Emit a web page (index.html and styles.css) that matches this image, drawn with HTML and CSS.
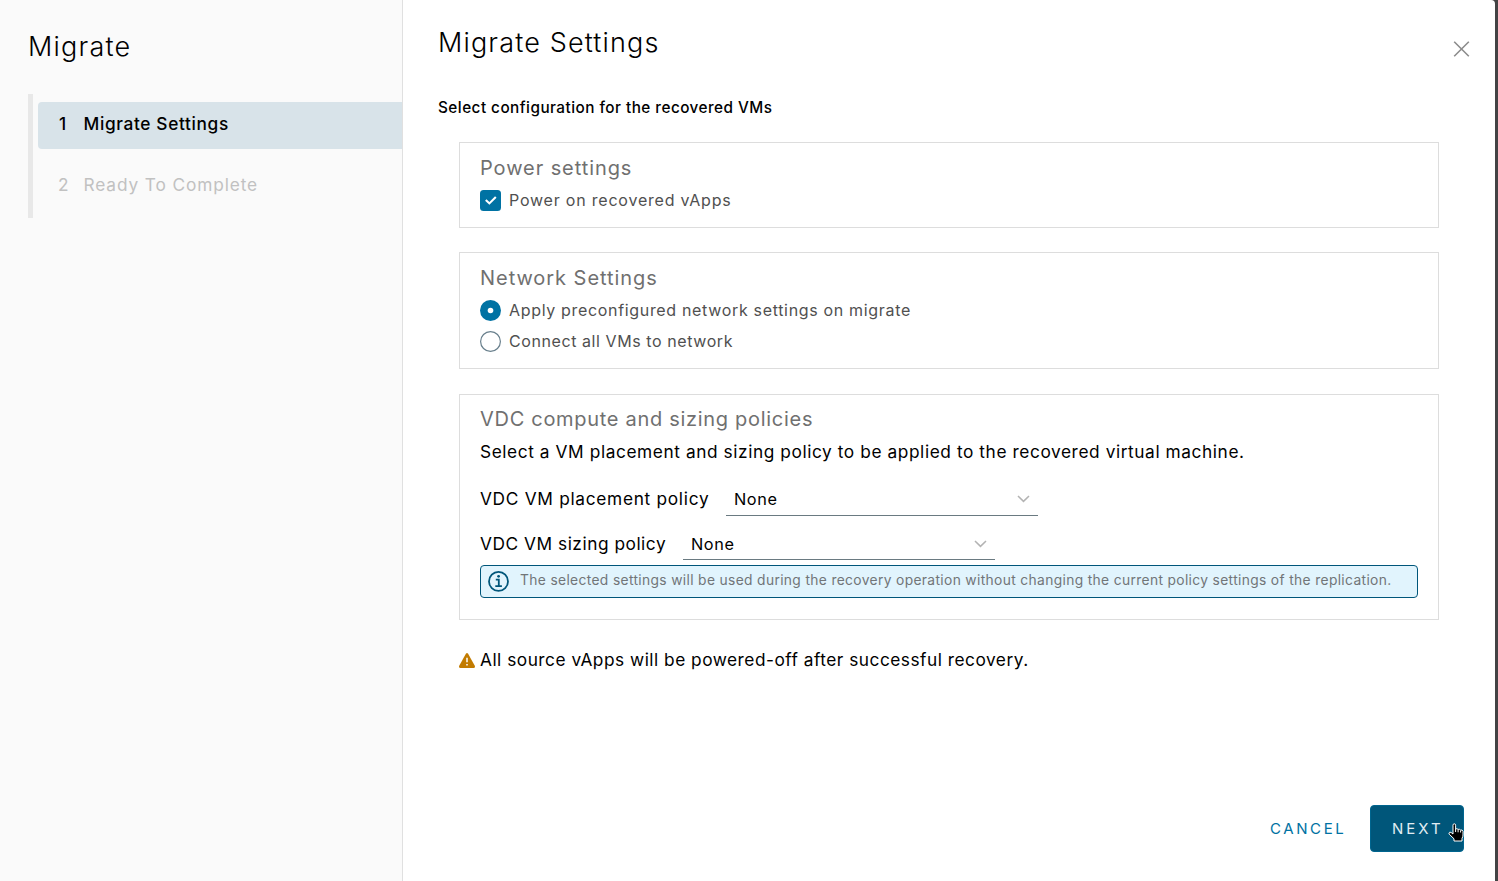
FILE: index.html
```html
<!DOCTYPE html>
<html lang="en">
<head>
<meta charset="utf-8">
<title>Migrate</title>
<link rel="stylesheet" href="styles.css">
</head>
<body>
<div class="wizard">
  <aside class="sidebar">
    <h1 class="sidebar-title"><span>Migrate</span></h1>
    <ol class="steps">
      <li class="step active"><span class="num">1</span><span class="step-name">Migrate Settings</span></li>
      <li class="step"><span class="num">2</span><span class="step-name">Ready To Complete</span></li>
    </ol>
  </aside>
  <main class="content">
    <header class="header">
      <h2 class="page-title"><span>Migrate Settings</span></h2>
      <button class="close" aria-label="Close"><svg width="18" height="18" viewBox="0 0 18 18"><path d="M1.2 1.7l14.6 14.6M15.8 1.7L1.2 16.3"/></svg></button>
    </header>
    <p class="subtitle"><span>Select configuration for the recovered VMs</span></p>
    <section class="card power">
      <h3 class="card-title"><span class="t-power">Power settings</span></h3>
      <label class="option"><svg class="control" viewBox="0 0 21 21"><rect class="fill" width="21" height="21" rx="3.5"/><path class="tick" d="M5.8 9.9l3.6 3.5 6.4-6.4"/></svg><span class="l-power">Power on recovered vApps</span></label>
    </section>
    <section class="card network">
      <h3 class="card-title"><span class="t-network">Network Settings</span></h3>
      <label class="option"><svg class="control" viewBox="0 0 21 21"><circle class="fill" cx="10.5" cy="10.5" r="10.5"/><circle class="dot" cx="10.5" cy="10.5" r="2.8"/></svg><span class="l-apply">Apply preconfigured network settings on migrate</span></label>
      <label class="option"><svg class="control" viewBox="0 0 21 21"><circle class="ring" cx="10.5" cy="10.5" r="9.9"/></svg><span class="l-connect">Connect all VMs to network</span></label>
    </section>
    <section class="card policies">
      <h3 class="card-title"><span class="t-policies">VDC compute and sizing policies</span></h3>
      <p class="description"><span>Select a VM placement and sizing policy to be applied to the recovered virtual machine.</span></p>
      <div class="field placement">
        <span class="field-name"><span class="f-placement">VDC VM placement policy</span></span>
        <div class="select"><span>None</span><svg width="13" height="8" viewBox="0 0 13 8"><path d="M1 1l5.5 5.4L12 1"/></svg></div>
      </div>
      <div class="field sizing">
        <span class="field-name"><span class="f-sizing">VDC VM sizing policy</span></span>
        <div class="select"><span>None</span><svg width="13" height="8" viewBox="0 0 13 8"><path d="M1 1l5.5 5.4L12 1"/></svg></div>
      </div>
      <div class="info"><svg width="22" height="22" viewBox="0 0 22 22"><circle cx="10.5" cy="11.4" r="9.5"/><path d="M7.8 9.6h3v6.2M7.3 16.1h6.6"/><circle class="info-dot" cx="10.6" cy="6.3" r="1.4"/></svg><span class="info-text">The selected settings will be used during the recovery operation without changing the current policy settings of the replication.</span></div>
    </section>
    <p class="warning"><svg width="16" height="15" viewBox="0 0 16 15"><path class="triangle" d="M6.9.7Q8-.7 9.1.7l6.7 12.1Q16.4 14.8 14.6 15H1.4Q-.4 14.8.2 12.8z"/><path class="bang" d="M8 4.8v4.5M8 11v1.6"/></svg><span>All source vApps will be powered-off after successful recovery.</span></p>
    <footer class="actions">
      <button class="cancel">CANCEL</button>
      <button class="next">NEXT<svg class="pointer" width="17" height="19" viewBox="0 0 17 19"><path d="M5 2.2Q5 .8 6.3.8T7.6 2.2V6Q9 5.2 10 6.4 11.6 5.8 12.4 7 14.4 6.5 15 8.2V12Q15 13.8 14 15.3V18H6V15.8L1.2 11.2Q.4 9.7 1.8 9.2 2.7 8.8 5 11z"/><path class="knuckles" d="M7.6 6v3M10.1 7v2.3M12.6 7.5v2"/></svg></button>
    </footer>
  </main>
  <div class="backdrop"></div>
</div>
</body>
</html>
```

FILE: styles.css
```css
* { box-sizing: border-box; }
body { margin: 0; background: #434344; color: #000; font-family: Inter, sans-serif; }
h1, h2, h3, p, ol { margin: 0; padding: 0; font-weight: 400; }
button { border: 0; padding: 0; background: none; font-family: inherit; }
svg { display: block; flex: none; fill: none; }
span { white-space: nowrap; }

.wizard { display: flex; width: 1498px; height: 881px; overflow: hidden; }
.sidebar { width: 403px; padding: 31px 0 0 28px; background: #fafafa; border-right: 1px solid #e0e0e0; }
.sidebar-title { height: 63px; font-size: 27px; font-weight: 300; line-height: 32px; letter-spacing: 1.2px; }
.steps { height: 124px; border-left: 5px solid #e8e8e8; padding: 8px 0 0 5px; list-style: none; }
.step { display: flex; height: 47px; margin-bottom: 14px; padding-left: 20px; border-radius: 4px 0 0 4px; color: #c1c1c1; font-size: 17.3px; line-height: 44px; letter-spacing: .88px; }
.step.active { background: #d8e3e9; color: #000; font-weight: 500; letter-spacing: .64px; }
.num { width: 25.5px; }
.active .num { padding-left: 1px; }

.content { display: flex; flex-direction: column; width: 1092px; padding: 0 31px 29px 35px; background: #fff; border-top-right-radius: 4px; }
.backdrop { width: 3px; background: #434344; }
.header { display: flex; justify-content: space-between; height: 95px; padding-top: 27px; }
.page-title { font-size: 27px; font-weight: 300; line-height: 32px; letter-spacing: 1.15px; }
.close { width: 18px; height: 18px; margin: 13px -7px 0 0; }
.close svg { stroke: #8c8c8c; stroke-width: 1.6; }
.subtitle { height: 47px; font-size: 15.3px; font-weight: 500; line-height: 25px; letter-spacing: .47px; }

.card { flex: none; width: 980px; margin-left: 21px; padding: 10px 20px 0; border: 1px solid #ddd; }
.power { height: 86px; margin-bottom: 24px; }
.network { height: 117px; margin-bottom: 25px; }
.policies { height: 226px; padding-top: 9px; }
.card-title { height: 32px; color: #707070; font-size: 20px; line-height: 30px; }
.t-power { letter-spacing: .92px; }
.t-network { letter-spacing: .95px; }
.t-policies { letter-spacing: .7px; }
.option { display: flex; gap: 8px; height: 31px; padding-top: 5px; color: #505050; font-size: 16px; line-height: 21px; }
.l-power { letter-spacing: .79px; }
.l-apply { letter-spacing: .67px; }
.l-connect { letter-spacing: .58px; }
.control { width: 21px; height: 21px; }
.fill { fill: #0072a3; }
.tick { stroke: #fff; stroke-width: 2.1; }
.dot { fill: #fff; }
.ring { stroke: #687f8c; stroke-width: 1.2; }
.description { height: 46px; font-size: 17.3px; line-height: 32px; letter-spacing: .58px; }
.field { display: flex; font-size: 17.3px; line-height: 33px; }
.f-placement { letter-spacing: .7px; }
.f-sizing { letter-spacing: .53px; }
.placement { height: 45px; }
.sizing { height: 38px; }
.placement .field-name { width: 246px; }
.sizing .field-name { width: 203px; }
.field .select { display: flex; align-items: center; justify-content: space-between; width: 312px; height: 33px; margin-top: 1px; padding: 0 8px; border-bottom: 1px solid #6a7a81; font-size: 16.3px; letter-spacing: .6px; }
.sizing .select { height: 32px; padding-top: 1px; }
.select svg { stroke: #b3b3b3; stroke-width: 1.5; }
.info { display: flex; gap: 10px; height: 33px; padding: 4px 7px; border: 1px solid #00567a; border-radius: 4px; background: #e1f4fd; color: #717578; font-size: 13.8px; line-height: 20px; letter-spacing: .35px; }
.info svg { stroke: #00567a; stroke-width: 1.8; }
.info .info-dot { fill: #00567a; stroke: none; }
.warning { display: flex; gap: 5px; margin: 24px 0 0 21px; font-size: 17.3px; line-height: 32px; letter-spacing: .5px; }
.warning svg { margin-top: 9px; }
.triangle { fill: #c27b00; }
.bang { stroke: #fff; stroke-width: 1.5; }
.actions { display: flex; justify-content: flex-end; margin-top: auto; height: 47px; }
.actions button { height: 47px; font-size: 15px; line-height: 46px; letter-spacing: 2.6px; }
.cancel { width: 76px; margin-right: 24px; color: #0072a3; text-align: left; }
.actions .next { position: relative; width: 94px; border: 1px solid #00658f; border-radius: 4px; background: #00567a; color: #e1edf3; line-height: 44px; padding-left: 21px; text-align: left; letter-spacing: 3px; }
.pointer { position: absolute; left: 77px; top: 17px; fill: #000; stroke: #fff; stroke-width: 1; }
.knuckles { stroke: #fff; stroke-width: 1; }
```
